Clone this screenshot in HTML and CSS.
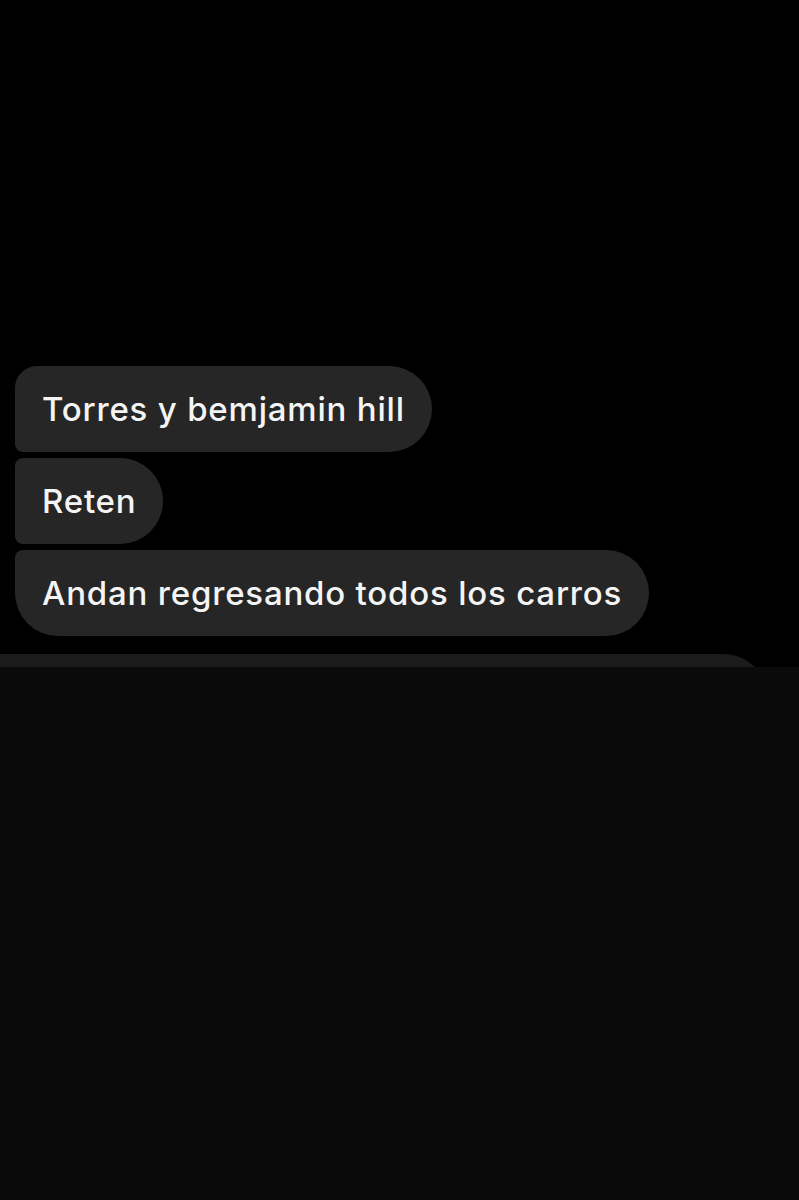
FILE: index.html
```html
<!DOCTYPE html>
<html lang="es">
<head>
    <meta charset="UTF-8">
    <meta name="viewport" content="width=device-width, initial-scale=1.0">
    <title>Mensajes</title>
    <link rel="stylesheet" href="styles.css">
</head>
<body>
<main class="chat">
    <div class="thread">
        <div class="bubble first">Torres y bemjamin hill</div>
        <div class="bubble middle">Reten</div>
        <div class="bubble last">Andan regresando todos los carros</div>
    </div>
    <div class="peek">
        <div class="peek-bubble"></div>
    </div>
    <div class="shade"></div>
</main>
</body>
</html>
```

FILE: styles.css
```css
html, body {
    margin: 0;
    padding: 0;
    background-color: #000;
}

.chat {
    width: 799px;
    height: 1200px;
    display: flex;
    flex-direction: column;
    font-family: Inter, Roboto, "Noto Sans", sans-serif;
}

.thread {
    display: flex;
    flex-direction: column;
    align-items: flex-start;
    gap: 6px;
    padding: 366px 0 0 15px;
}

.bubble {
    box-sizing: border-box;
    height: 86px;
    padding: 0 27px;
    display: flex;
    align-items: center;
    background-color: #262626;
    color: #f4f4f4;
    font-size: 33px;
    font-weight: 500;
    letter-spacing: 0.8px;
    border-radius: 43px;
}

.first {
    border-radius: 22px 43px 43px 8px;
}

.middle {
    border-radius: 8px 43px 43px 8px;
}

.last {
    border-radius: 8px 43px 43px 43px;
}

.peek {
    margin-top: 18px;
    height: 13px;
    overflow: hidden;
}

.peek-bubble {
    width: 767px;
    height: 86px;
    background-color: #1b1b1b;
    border-radius: 0 43px 43px 0;
}

.shade {
    flex: 1;
    background-color: #0a0a0a;
}
```
